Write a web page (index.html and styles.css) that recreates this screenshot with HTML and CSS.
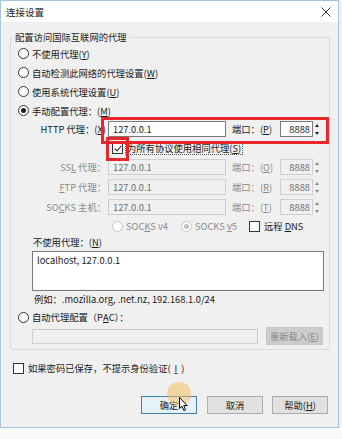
FILE: index.html
```html
<!DOCTYPE html>
<html lang="zh-CN">
<head>
    <meta charset="UTF-8">
    <title>连接设置</title>
    <link rel="stylesheet" href="styles.css">
</head>
<body>

<div class="window">
    <div class="titlebar">
        <span class="title">连接设置</span>
        <svg class="close" width="10" height="10" viewBox="0 0 10 10">
            <path d="M0.5 0.5 L9.5 9.5 M9.5 0.5 L0.5 9.5" stroke="#333" stroke-width="1"/>
        </svg>
    </div>

    <div class="content">
        <fieldset class="group">
            <legend>配置访问国际互联网的代理</legend>

            <div class="opt"><span class="radio"></span>不使用代理(<u>Y</u>)</div>
            <div class="opt"><span class="radio"></span>自动检测此网络的代理设置(<u>W</u>)</div>
            <div class="opt"><span class="radio"></span>使用系统代理设置(<u>U</u>)</div>
            <div class="opt"><span class="radio on"></span>手动配置代理：(<u>M</u>)</div>

            <div class="proxy-row http">
                <span class="plabel">HTTP 代理：(<u>X</u>)</span>
                <span class="field">127.0.0.1</span>
                <span class="portlabel">端口：(<u>P</u>)</span>
                <span class="port">8888</span>
                <span class="spin"><i class="up"></i><i class="down"></i></span>
            </div>

            <div class="same-row">
                <span class="check on"></span>
                <span class="focus">为所有协议使用相同代理(<u>S</u>)</span>
            </div>

            <div class="proxy-row off">
                <span class="plabel">SS<u>L</u> 代理：</span>
                <span class="field">127.0.0.1</span>
                <span class="portlabel">端口：(<u>O</u>)</span>
                <span class="port">8888</span>
                <span class="spin"><i class="up"></i><i class="down"></i></span>
            </div>
            <div class="proxy-row off">
                <span class="plabel"><u>F</u>TP 代理：</span>
                <span class="field">127.0.0.1</span>
                <span class="portlabel">端口：(<u>R</u>)</span>
                <span class="port">8888</span>
                <span class="spin"><i class="up"></i><i class="down"></i></span>
            </div>
            <div class="proxy-row off">
                <span class="plabel">SO<u>C</u>KS 主机：</span>
                <span class="field">127.0.0.1</span>
                <span class="portlabel">端口：(<u>T</u>)</span>
                <span class="port">8888</span>
                <span class="spin"><i class="up"></i><i class="down"></i></span>
            </div>

            <div class="socks-row">
                <span class="radio dim"></span><span class="dimtext v4">SOC<u>K</u>S v4</span>
                <span class="radio dim on"></span><span class="dimtext v5">SOCKS <u>v</u>5</span>
                <span class="check"></span><span>远程 <u>D</u>NS</span>
            </div>

            <div class="noproxy-label">不使用代理：(<u>N</u>)</div>
            <div class="noproxy">localhost, 127.0.0.1</div>
            <div class="example">例如：.mozilla.org, .net.nz, 192.168.1.0/24</div>

            <div class="opt pac"><span class="radio"></span>自动代理配置（P<u>A</u>C）：</div>
            <div class="pac-row">
                <span class="pac-field"></span>
                <span class="reload">重新载入(<u>E</u>)</span>
            </div>
        </fieldset>

        <div class="auth-row"><span class="check"></span>如果密码已保存，不提示身份验证(<u>I</u>)</div>

        <div class="buttons">
            <span class="btn default">确定</span>
            <span class="btn">取消</span>
            <span class="btn">帮助(<u>H</u>)</span>
        </div>
    </div>

    <!-- annotation boxes drawn over the dialog -->
    <div class="mark mark-http"></div>
    <div class="mark mark-check"></div>

    <!-- click highlight + mouse pointer -->
    <div class="click-glow"></div>
    <svg class="cursor" width="10" height="15" viewBox="0 0 10 15">
        <path d="M0.5 0.5 L0.5 11.5 L3 9.2 L4.8 13.5 L6.5 12.8 L4.8 8.6 L8.2 8.6 Z" fill="#fff" stroke="#000" stroke-width="1"/>
    </svg>
</div>

</body>
</html>
```

FILE: styles.css
```css
/* Connection settings dialog */
body {
    margin: 0;
    background-color: #fafafa;
    font-family: "Noto Sans CJK SC", "Noto Sans", sans-serif;
    font-size: 9.3px;
    color: #1a1a1a;
}

u {
    text-decoration: underline;
    text-underline-offset: 1px;
}

.window {
    position: relative;
    width: 337px;
    height: 426px;
    border: 1px solid #a6c3e3;
    background-color: #f0f0f0;
    box-shadow: 0 2px 6px rgba(0, 0, 0, 0.12);
}

.titlebar {
    height: 21px;
    background-color: #fff;
    display: flex;
    align-items: center;
    justify-content: space-between;
    padding: 0 7px 0 5px;
}

.title {
    font-size: 9.5px;
}

.content {
    padding: 0 0 0 0;
}

/* Group box */
.group {
    margin: 9px 0 0 9px;
    width: 318px;
    padding: 0 0 4px 0;
    border: 1px solid #dcdcdc;
    border-radius: 2px;
    box-sizing: border-box;
    width: 320px;
}

.group legend {
    margin-left: 2px;
    padding: 0 2px;
    line-height: 12px;
}

.opt {
    display: flex;
    align-items: center;
    height: 19px;
    padding-left: 7px;
}

.opt:first-of-type {
    margin-top: 1px;
}

/* radio + checkbox drawn by hand */
.radio {
    width: 11px;
    height: 11px;
    box-sizing: border-box;
    border: 1px solid #333;
    border-radius: 50%;
    background-color: #fff;
    margin-right: 3px;
    display: flex;
    align-items: center;
    justify-content: center;
    flex-shrink: 0;
}

.radio.on::after {
    content: "";
    width: 5px;
    height: 5px;
    border-radius: 50%;
    background-color: #222;
}

.radio.dim {
    border-color: #c4c4c4;
}

.radio.dim.on::after {
    background-color: #c0c0c0;
}

.check {
    width: 11px;
    height: 11px;
    box-sizing: border-box;
    border: 1px solid #333;
    background-color: #fff;
    flex-shrink: 0;
    position: relative;
}

.check.on::after {
    content: "";
    position: absolute;
    left: 3px;
    top: 0px;
    width: 3px;
    height: 6px;
    border: solid #222;
    border-width: 0 1px 1px 0;
    transform: rotate(40deg);
}

/* proxy rows */
.proxy-row {
    display: flex;
    align-items: center;
    height: 16px;
    margin-top: 4px;
}

.proxy-row.http {
    margin-top: 1px;
}

.plabel {
    width: 95px;
    text-align: right;
    flex-shrink: 0;
}

.field {
    margin-left: 2px;
    width: 118px;
    height: 16px;
    box-sizing: border-box;
    border: 1px solid #7a7a7a;
    background-color: #fff;
    padding-left: 4px;
    line-height: 14px;
}

.portlabel {
    width: 46px;
    margin-left: 6px;
    flex-shrink: 0;
}

.port {
    margin-left: 2px;
    width: 33px;
    height: 16px;
    box-sizing: border-box;
    border: 1px solid #7a7a7a;
    background-color: #fff;
    text-align: right;
    padding-right: 2px;
    line-height: 14px;
}

.spin {
    width: 8px;
    height: 16px;
    display: flex;
    flex-direction: column;
    align-items: center;
    justify-content: space-around;
}

.spin i {
    width: 0;
    height: 0;
    border-left: 2.5px solid transparent;
    border-right: 2.5px solid transparent;
}

.spin .up {
    border-bottom: 3px solid #222;
}

.spin .down {
    border-top: 3px solid #222;
}

.proxy-row.off {
    color: #8a8a8a;
}

.proxy-row.off .field,
.proxy-row.off .port {
    background-color: #f0f0f0;
    border-color: #cfcfcf;
    color: #6e6e6e;
}

.proxy-row.off .spin .up {
    border-bottom-color: #8a8a8a;
}

.proxy-row.off .spin .down {
    border-top-color: #8a8a8a;
}

.same-row {
    display: flex;
    align-items: center;
    height: 16px;
    margin-top: 3px;
    padding-left: 101px;
}

.same-row + .proxy-row {
    margin-top: 3px;
}

.focus {
    margin-left: 3px;
    outline: 1px dotted #555;
    padding: 0 1px;
    line-height: 12px;
}

.socks-row {
    display: flex;
    align-items: center;
    height: 16px;
    margin-top: 3px;
    padding-left: 101px;
}

.dimtext {
    color: #8a8a8a;
}

.v4 {
    width: 55px;
}

.v5 {
    width: 54px;
}

.socks-row .check {
    margin-right: 4px;
}

.noproxy-label {
    margin-top: 1px;
    height: 14px;
    line-height: 14px;
    padding-left: 22px;
}

.noproxy {
    margin: 2px 0 0 21px;
    width: 292px;
    height: 40px;
    box-sizing: border-box;
    border: 1px solid #7a7a7a;
    background-color: #fff;
    padding: 2px 0 0 4px;
    line-height: 12px;
}

.example {
    margin-top: 1px;
    height: 15px;
    line-height: 15px;
    padding-left: 23px;
}

.opt.pac {
    height: 16px;
    margin-top: 2px;
}

.pac-row {
    display: flex;
    align-items: center;
    margin: 2px 0 0 21px;
}

.pac-field {
    width: 226px;
    height: 15px;
    box-sizing: border-box;
    border: 1px solid #d0d0d0;
    background-color: #f0f0f0;
}

.reload {
    margin-left: 8px;
    width: 57px;
    height: 18px;
    box-sizing: border-box;
    border: 1px solid #c8c8c8;
    background-color: #cccccc;
    color: #8a8a8a;
    text-align: center;
    line-height: 16px;
}

/* bottom part */
.auth-row {
    display: flex;
    align-items: center;
    gap: 4px;
    height: 14px;
    margin-top: 11px;
    padding-left: 12px;
}

.buttons {
    display: flex;
    justify-content: flex-end;
    gap: 9px;
    margin-top: 21px;
    padding-right: 10px;
}

.btn {
    width: 56px;
    height: 18px;
    box-sizing: border-box;
    border: 1px solid #adadad;
    background-color: #e1e1e1;
    text-align: center;
    line-height: 16px;
}

.btn.default {
    border-color: #3c7fb1;
    background-color: #e5f1fb;
    margin-right: 1px;
}

/* red annotation frames */
.mark {
    position: absolute;
    border: 3px solid #e8262b;
    box-sizing: border-box;
}

.mark-http {
    left: 100px;
    top: 116px;
    width: 228px;
    height: 27px;
}

.mark-check {
    left: 105px;
    top: 136px;
    width: 23px;
    height: 24px;
}

.click-glow {
    position: absolute;
    left: 166px;
    top: 381px;
    width: 24px;
    height: 24px;
    border-radius: 50%;
    background-color: rgba(250, 190, 100, 0.55);
}

.cursor {
    position: absolute;
    left: 178px;
    top: 396px;
}
```
